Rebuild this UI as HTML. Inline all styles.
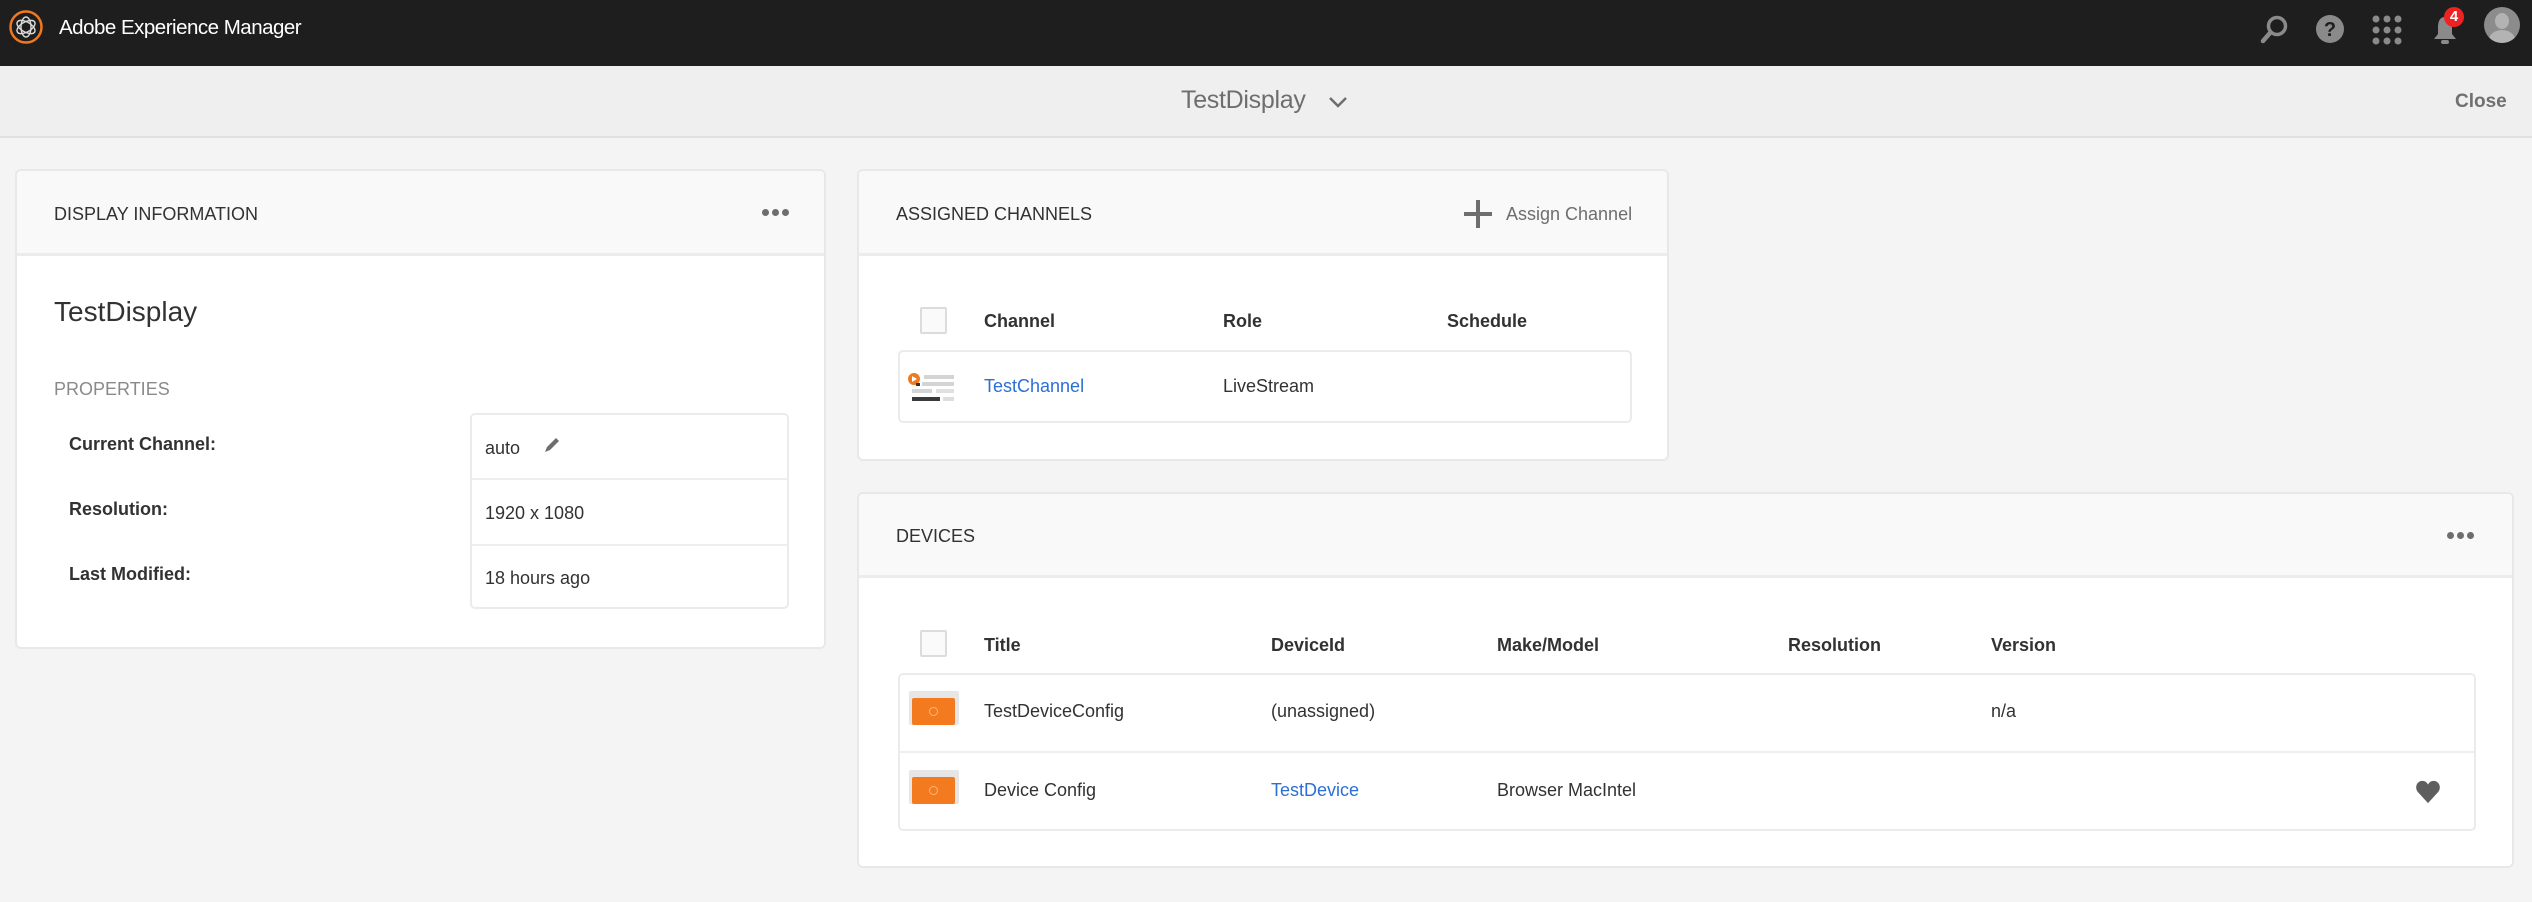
<!DOCTYPE html>
<html><head><meta charset="utf-8"><style>
*{margin:0;padding:0;box-sizing:border-box}
body{width:2532px;height:902px;background:#f4f4f4;font-family:"Liberation Sans",sans-serif;color:#323232;position:relative;overflow:hidden}
.a{position:absolute}
.hdr{left:0;top:0;width:2532px;height:66px;background:#1e1e1e}
.tb{left:0;top:66px;width:2532px;height:72px;background:#efefef;border-bottom:2px solid #e0e0e0}
.card{background:#fff;border:2px solid #e8e8e8;border-radius:6px;overflow:hidden}
.ch{position:absolute;left:0;top:0;right:0;background:#f9f9f9;border-bottom:3px solid #ececec}
.t{position:absolute;white-space:nowrap;font-size:18px;line-height:1}
.b{font-weight:bold}
.lnk{color:#2c6fd6}
.dots{position:absolute;display:flex;gap:3px}
.dots i{width:7px;height:7px;border-radius:50%;background:#6e6e6e;display:block}
.cb{position:absolute;width:27px;height:27px;border:2px solid #dcdcdc;background:#fafafa;border-radius:2px}
</style></head><body>
<div class="a hdr"></div>
<svg class="a" style="left:8px;top:9px" width="36" height="36" viewBox="0 0 36 36"><circle cx="18" cy="18" r="15.5" fill="none" stroke="#f0781e" stroke-width="2.5"/><g fill="none" stroke="#ddd" stroke-width="1.4"><ellipse cx="18" cy="18" rx="5" ry="10"/><ellipse cx="18" cy="18" rx="5" ry="10" transform="rotate(60 18 18)"/><ellipse cx="18" cy="18" rx="5" ry="10" transform="rotate(-60 18 18)"/></g></svg>
<div class="t" style="left:59px;top:18px;color:#fff;font-size:20.5px;letter-spacing:-0.5px">Adobe Experience Manager</div>
<svg class="a" style="left:2258px;top:14px" width="32" height="32" viewBox="0 0 32 32"><circle cx="19" cy="12" r="8.5" fill="none" stroke="#8a8a8a" stroke-width="3.5"/><path d="M12 19 L5 27" stroke="#8a8a8a" stroke-width="4.5" stroke-linecap="round"/></svg>
<svg class="a" style="left:2315px;top:14px" width="30" height="30"><circle cx="15" cy="15" r="14" fill="#8a8a8a"/><text x="15" y="22" text-anchor="middle" font-family="Liberation Sans" font-weight="bold" font-size="20" fill="#1e1e1e">?</text></svg>
<svg class="a" style="left:2372px;top:15px" width="30" height="30"><g fill="#8a8a8a"><circle cx="4" cy="4" r="3.5"/><circle cx="15" cy="4" r="3.5"/><circle cx="26" cy="4" r="3.5"/><circle cx="4" cy="15" r="3.5"/><circle cx="15" cy="15" r="3.5"/><circle cx="26" cy="15" r="3.5"/><circle cx="4" cy="26" r="3.5"/><circle cx="26" cy="26" r="3.5"/><circle cx="15" cy="26" r="3.5"/></g></svg>
<svg class="a" style="left:2431px;top:12px" width="28" height="34"><path d="M14 5 C8 5 7 11 7 16 L7 22 L3 27 L25 27 L21 22 L21 16 C21 11 20 5 14 5Z" fill="#8a8a8a"/><rect x="10" y="28" width="8" height="4" rx="2" fill="#8a8a8a"/></svg>
<div class="a" style="left:2444px;top:7px;width:20px;height:20px;border-radius:50%;background:#e22;color:#fff;font-size:15px;font-weight:bold;text-align:center;line-height:20px">4</div>
<div class="a" style="left:2484px;top:7px;width:36px;height:36px;border-radius:50%;background:#8c8c8c;overflow:hidden"><div class="a" style="left:11px;top:6px;width:14px;height:16px;border-radius:50%;background:#b3b3b3"></div><div class="a" style="left:5px;top:23px;width:26px;height:20px;border-radius:50%;background:#b3b3b3"></div></div>

<div class="a tb"></div>
<div class="t" style="left:1181px;top:88px;font-size:25px;color:#6e6e6e;letter-spacing:-0.3px">TestDisplay</div>
<svg class="a" style="left:1328px;top:95px" width="20" height="14"><path d="M2 3 L10 11 L18 3" fill="none" stroke="#6e6e6e" stroke-width="2.5"/></svg>
<div class="t b" style="left:2455px;top:92px;font-size:19px;color:#707070">Close</div>

<!-- card 1 -->
<div class="a card" style="left:15px;top:169px;width:811px;height:480px">
 <div class="ch" style="height:85px"></div>
 <div class="t" style="left:37px;top:34px">DISPLAY INFORMATION</div>
 <div class="dots" style="left:745px;top:38px"><i></i><i></i><i></i></div>
 <div class="t" style="left:37px;top:127px;font-size:28px">TestDisplay</div>
 <div class="t" style="left:37px;top:209px;color:#8a8a8a">PROPERTIES</div>
 <div class="t b" style="left:52px;top:264px">Current Channel:</div>
 <div class="t b" style="left:52px;top:329px">Resolution:</div>
 <div class="t b" style="left:52px;top:394px">Last Modified:</div>
 <div class="a" style="left:453px;top:242px;width:319px;height:196px;border:2px solid #ebebeb;border-radius:5px">
  <div class="a" style="left:0;right:0;top:63px;border-top:2px solid #eeeeee"></div>
  <div class="a" style="left:0;right:0;top:129px;border-top:2px solid #eeeeee"></div>
  <div class="t" style="left:13px;top:24px">auto</div>
  <svg class="a" style="left:70px;top:20px" width="20" height="20"><path d="M3 17 L5 12 L14 3 L17 6 L8 15Z" fill="#6e6e6e"/></svg>
  <div class="t" style="left:13px;top:89px">1920 x 1080</div>
  <div class="t" style="left:13px;top:154px">18 hours ago</div>
 </div>
</div>

<!-- card 2 -->
<div class="a card" style="left:857px;top:169px;width:812px;height:292px">
 <div class="ch" style="height:85px"></div>
 <div class="t" style="left:37px;top:34px">ASSIGNED CHANNELS</div>
 <svg class="a" style="left:604px;top:28px" width="30" height="30"><path d="M15 1 V29 M1 15 H29" stroke="#6e6e6e" stroke-width="4"/></svg>
 <div class="t" style="left:647px;top:34px;color:#6e6e6e">Assign Channel</div>
 <div class="cb" style="left:61px;top:136px"></div>
 <div class="t b" style="left:125px;top:141px">Channel</div>
 <div class="t b" style="left:364px;top:141px">Role</div>
 <div class="t b" style="left:588px;top:141px">Schedule</div>
 <div class="a" style="left:39px;top:179px;width:734px;height:73px;border:2px solid #ebebeb;border-radius:5px"></div>
 <svg class="a" style="left:49px;top:200px" width="52" height="36"><rect x="16" y="4" width="30" height="4" fill="#d4d4d4"/><rect x="14" y="11" width="32" height="4" fill="#d4d4d4"/><rect x="4" y="18" width="20" height="4" fill="#d4d4d4"/><rect x="28" y="18" width="18" height="4" fill="#e0e0e0"/><rect x="4" y="26" width="28" height="4" fill="#3a3a3a"/><rect x="35" y="26" width="11" height="4" fill="#ddd"/><circle cx="6" cy="8" r="6" fill="#f0781e"/><path d="M4 5 L9 8 L4 11Z" fill="#fff"/><rect x="8" y="12" width="4" height="3" fill="#333"/></svg>
 <div class="t lnk" style="left:125px;top:206px">TestChannel</div>
 <div class="t" style="left:364px;top:206px">LiveStream</div>
</div>

<!-- card 3 -->
<div class="a card" style="left:857px;top:492px;width:1657px;height:376px">
 <div class="ch" style="height:84px"></div>
 <div class="t" style="left:37px;top:33px">DEVICES</div>
 <div class="dots" style="left:1588px;top:38px"><i></i><i></i><i></i></div>
 <div class="cb" style="left:61px;top:136px"></div>
 <div class="t b" style="left:125px;top:142px">Title</div>
 <div class="t b" style="left:412px;top:142px">DeviceId</div>
 <div class="t b" style="left:638px;top:142px">Make/Model</div>
 <div class="t b" style="left:929px;top:142px">Resolution</div>
 <div class="t b" style="left:1132px;top:142px">Version</div>
 <div class="a" style="left:39px;top:179px;width:1578px;height:158px;border:2px solid #ebebeb;border-radius:5px"><div class="a" style="left:0;right:0;top:76px;border-top:2px solid #eeeeee"></div></div>
 <div class="a" style="left:50px;top:197px;width:50px;height:34px;background:#e6e6e6;border-radius:2px"><div class="a" style="left:3px;top:7px;width:43px;height:27px;background:#f47a20;border-radius:2px"></div><div class="a" style="left:20px;top:16px;width:9px;height:9px;border-radius:50%;border:1.5px solid #fbb57c"></div></div>
 <div class="a" style="left:50px;top:276px;width:50px;height:34px;background:#e6e6e6;border-radius:2px"><div class="a" style="left:3px;top:7px;width:43px;height:27px;background:#f47a20;border-radius:2px"></div><div class="a" style="left:20px;top:16px;width:9px;height:9px;border-radius:50%;border:1.5px solid #fbb57c"></div></div>
 <div class="t" style="left:125px;top:208px">TestDeviceConfig</div>
 <div class="t" style="left:412px;top:208px">(unassigned)</div>
 <div class="t" style="left:1132px;top:208px">n/a</div>
 <div class="t" style="left:125px;top:287px">Device Config</div>
 <div class="t lnk" style="left:412px;top:287px">TestDevice</div>
 <div class="t" style="left:638px;top:287px">Browser MacIntel</div>
 <svg class="a" style="left:1556px;top:286px" width="26" height="24" viewBox="0 0 28 26"><path d="M14 25 L3 13 C-1 8 2 1 8 1 C11 1 13 3 14 5 C15 3 17 1 20 1 C26 1 29 8 25 13Z" fill="#5e5e5e"/></svg>
</div>
</body></html>
